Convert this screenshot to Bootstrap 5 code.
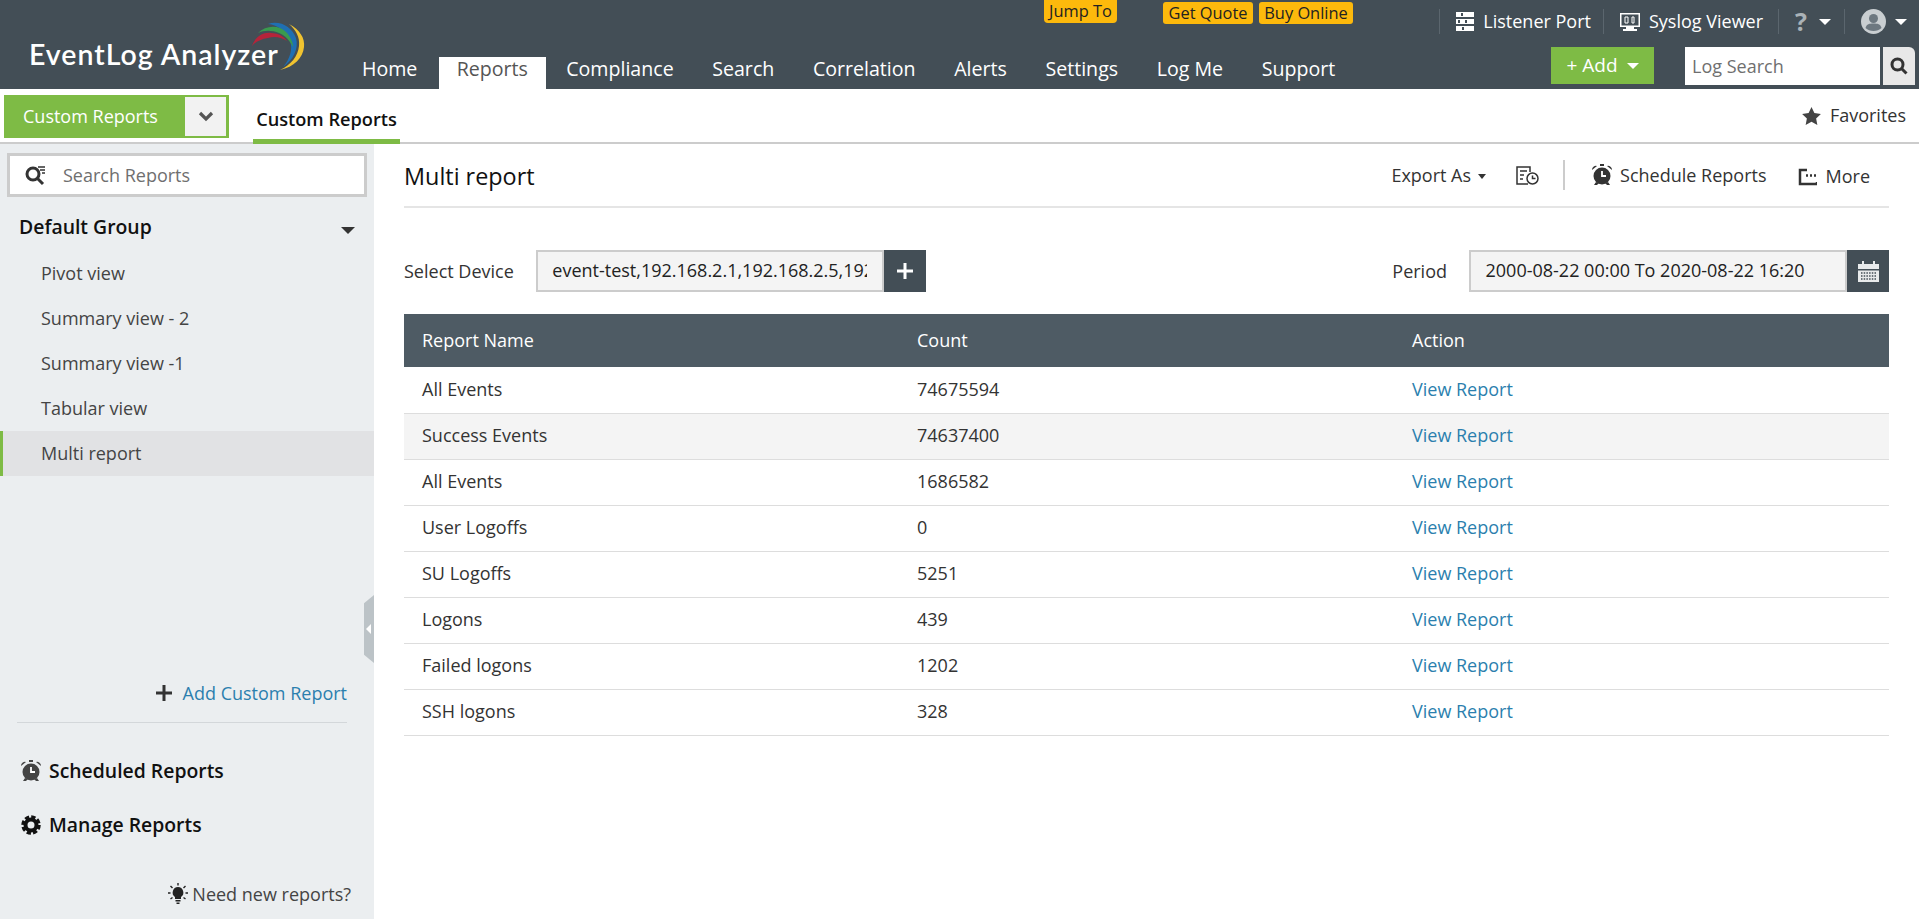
<!DOCTYPE html>
<html lang="en">
<head>
<meta charset="utf-8">
<title>EventLog Analyzer</title>
<link href="https://cdn.jsdelivr.net/npm/bootstrap@5.3.0/dist/css/bootstrap.min.css" rel="stylesheet">
<style>
html,body{height:100%;overflow:hidden}
body{font-family:"Open Sans","Liberation Sans",sans-serif;font-size:18px;color:#222;background:#fff}
a{text-decoration:none}
.app-shell{height:919px}
.top-head{height:89px;background:#434e56;color:#fff;flex:none}
.logo-area{width:362px;flex:none;padding:20px 0 0 29px}
.logo-name{font-family:Lato,"Open Sans",sans-serif;font-weight:600;font-size:28.5px;line-height:1;letter-spacing:1px;padding-top:20px;white-space:nowrap}
.logo-arc{position:absolute;left:250px;top:20px}
.head-right{min-width:0}
.row-top{height:47px;padding-right:12px}
.row-nav{height:42px}
.promo{background:#fdb90c;color:#222;font-size:16.4px;line-height:22px;padding:0;border-radius:3px;white-space:nowrap}
.promo-jump{margin-left:682px;height:23px;border-radius:0 0 4px 4px;width:73px;text-align:center}
.promo-quote{margin-left:46px;margin-top:2px;width:90px;text-align:center}
.promo-buy{margin-left:6px;margin-top:2px;width:94px;text-align:center}
.top-links{margin-left:auto;height:25px;margin-top:9px;font-size:18px;line-height:25px}
.top-link{padding:0 13px 0 16px;border-left:1px solid #5b666e;gap:9px;white-space:nowrap}
.top-link-listen{padding-right:12px}
.top-link-syslog{padding-right:15px}
.main-nav{margin:0;padding:0;list-style:none;height:32px;align-self:flex-end}
.main-nav a{display:block;color:#fff;font-size:19.6px;line-height:23px;padding:0 19.3px}
.main-nav li:first-child a{padding-left:0}
.main-nav li:nth-child(2){margin:0 1px 0 2px}
.main-nav .cur a{background:#fff;color:#555;height:32px;padding:0 18px}
.add-btn{background:#7ebb45;color:#fff;font-size:19px;width:103px;height:37px;border:0;border-radius:0;margin-left:auto;padding:0;display:flex;align-items:center;justify-content:center;gap:9px}
.add-btn:hover{background:#7ebb45;color:#fff}
.log-field{width:195px;height:38px;border:0;border-radius:0;margin:0 0 0 31px;font-size:18px;padding:0 4px 0 7px;color:#555}
.log-field::placeholder,.side-find input::placeholder{color:#6f6f6f;opacity:1}
.log-go{width:32px;height:38px;background:#e8e8e8;margin:0 4px 0 3px;border-radius:0 6px 0 0}
.sub-bar{height:55px;border-bottom:2px solid #ccc;flex:none;padding:6px 13px 0 4px}
.group-pick{width:225px;height:43px;background:#7ebb45;color:#fff;font-size:18px;padding:2px 3px 2px 19px}
.group-drop{width:41px;height:39px;background:#f2f2f2}
.sub-tab{margin-left:24px;height:49px;width:147px;text-align:center;border-bottom:5px solid #7ebb45;font-size:18.2px;font-weight:600;color:#111;line-height:48px}
.fav-link{margin-left:auto;gap:9px;font-size:18px;color:#333;padding-bottom:6px}
.side-panel{width:374px;flex:none;background:#ebeef0;position:relative;padding-top:9px}
.side-find{margin:0 7px 0 7px;height:44px;background:#fff;border:3px solid #ccc;padding-left:15px;gap:17px}
.side-find input{border:0;outline:0;background:transparent;font-size:18px;padding:0;width:270px;min-width:0;color:#555}
.grp-row{height:54px;padding:6px 18px 0 19px;font-size:19.4px;font-weight:600;color:#111}
.grp-caret{width:0;height:0;border:7px solid transparent;border-top:7px solid #333;border-bottom:0;margin:6px 1px 0 0}
.side-item{height:45px;padding-left:41px;color:#444;font-size:18px;display:flex;align-items:center}
.side-item.on{background:#e1e2e4;box-shadow:inset 3px 0 0 #7ebb45}
.side-handle{position:absolute;left:364px;top:451px;width:10px;height:68px;background:#bcc3c7;clip-path:polygon(100% 0,100% 100%,0 88%,0 12%)}
.side-handle::after{content:"";position:absolute;left:2px;top:29px;border:5px solid transparent;border-right:5px solid #fff;border-left:0}
.add-custom{margin-top:auto;height:34px;padding-right:27px;gap:11px;font-size:18px;color:#2b7fae}
.side-rule{margin:12px 27px 26px 17px;border-top:1px solid #d3d7da;height:0}
.side-cmd{height:44px;padding-left:21px;gap:8px;font-size:19.4px;font-weight:600;color:#111;margin-bottom:10px}
.need-row{height:34px;margin:20px 23px 8px 0;gap:4px;font-size:18px;color:#444}
.work{padding:0 30px;min-width:0}
.tool-row{height:64px;border-bottom:2px solid #e5e5e5;flex:none}
.page-title{font-size:23.4px;font-weight:500;margin:0;color:#111;line-height:1.2;padding-top:2px}
.tool-acts{margin-left:auto;font-size:18px;color:#333;height:30px}
.hist-icon{margin-left:30px}
.caret-sm{display:inline-block;width:0;height:0;border:4.5px solid transparent;border-top:5px solid #333;border-bottom:0;margin-left:7px;vertical-align:middle}
.v-rule{width:2px;height:30px;background:#ccc;margin:0 27px 0 24px}
.filter-row{margin-top:42px;height:42px;flex:none}
.fake-input{height:42px;border:2.500px solid #ccc;background:#f4f4f4;font-size:18px;padding:0 14.500px;line-height:37px;white-space:nowrap;overflow:hidden;color:#222}
.fake-inner{overflow:hidden;display:block}
.input-tail{width:42px;height:42px;background:#434e56}
.flt-label{font-size:18px;color:#333}
.log-table{margin:22px 0 0;font-size:18px;color:#333;table-layout:fixed;width:100%;--bs-table-bg:transparent}
.log-table th{background:#4e5b64;color:#fff;font-weight:400;height:53px;padding:0 18px;vertical-align:middle;border:0}
.log-table td{height:46px;padding:0 18px 1px;vertical-align:middle;border-bottom:1px solid #ddd;background:#fff;color:#333}
.log-table tr.alt td{background:#f4f4f4}
.log-table a{color:#2b7fae}
</style>
</head>
<body>
<div class="app-shell d-flex flex-column">
  <header class="top-head d-flex position-relative">
    <div class="logo-area"><div class="logo-name">EventLog Analyzer</div></div>
    <svg class="logo-arc" width="56" height="52" viewBox="250 20 56 52">
      <path d="M289 24C300 30 305 38 304 47C303 58 294 67 280 70C291 65 298 56 299 46C300 37 296 30 289 24Z" fill="#f0c330"/>
      <path d="M268 24C280 20 292 27 296 38C299 49 293 60 283 67C290 59 293 49 290 41C286 31 278 25 268 24Z" fill="#1f6fb2"/>
      <path d="M258 33C266 25 279 25 286 32C290 36 293 42 293 47C290 41 285 35 279 33C272 30 264 30 258 33Z" fill="#3a9a4e"/>
      <path d="M252 46C255 37 263 32 271 33C279 33 284 37 287 41C281 37 274 36 268 38C261 39 255 42 252 46Z" fill="#b5243a"/>
    </svg>
    <div class="head-right flex-grow-1 d-flex flex-column">
      <div class="row-top d-flex align-items-start">
        <a class="promo promo-jump" href="#">Jump To</a>
        <a class="promo promo-quote" href="#">Get Quote</a>
        <a class="promo promo-buy" href="#">Buy Online</a>
        <div class="top-links d-flex">
          <a class="top-link top-link-listen d-flex align-items-center text-white" href="#">
            <svg width="18" height="19" viewBox="0 0 18 19" fill="#fff"><rect width="18" height="5"/><rect y="7" width="18" height="5"/><rect y="14" width="18" height="5"/><path d="M5 1h2v3H5zM2 8h2v3H2zM9 8h2v3H9zM6 15h2v3H6z" fill="#434e56"/></svg>
            Listener Port</a>
          <a class="top-link top-link-syslog d-flex align-items-center text-white" href="#">
            <svg width="20" height="20" viewBox="0 0 20 20"><rect x=".75" y="1.75" width="18.5" height="12.5" fill="none" stroke="#fff" stroke-width="1.5"/><path d="M6 15h8v2h3v2H3v-2h3z" fill="#fff"/><path d="M5 5h3v6H5zM12 5h2v6h-2z" fill="none" stroke="#fff"/></svg>
            Syslog Viewer</a>
          <a class="top-link d-flex align-items-center" href="#" style="color:#aab2b7">
            <span class="fw-bold" style="font-size:25px;line-height:25px">?</span><span class="caret-sm" style="border-top-color:#fff;border-width:6px 6px 0;margin-left:3px"></span></a>
          <a class="top-link d-flex align-items-center" href="#" style="padding-right:0">
            <svg width="25" height="25" viewBox="0 0 25 25"><circle cx="12.5" cy="12.5" r="12.5" fill="#c9ced1"/><circle cx="12.5" cy="9.5" r="4.5" fill="#6d7880"/><path d="M4.5 19c1-4 4-4.500 8-4.500s7 .5 8 4.500c-2 2-5 3-8 3s-6-1-8-3z" fill="#6d7880"/></svg>
            <span class="caret-sm" style="border-top-color:#fff;border-width:6px 6px 0;margin-left:0"></span></a>
        </div>
      </div>
      <div class="row-nav d-flex">
        <ul class="main-nav d-flex">
          <li><a href="#">Home</a></li>
          <li class="cur"><a href="#">Reports</a></li>
          <li><a href="#">Compliance</a></li>
          <li><a href="#">Search</a></li>
          <li><a href="#">Correlation</a></li>
          <li><a href="#">Alerts</a></li>
          <li><a href="#">Settings</a></li>
          <li><a href="#">Log Me</a></li>
          <li><a href="#">Support</a></li>
        </ul>
        <button class="btn add-btn" type="button"><span>+ Add</span><span class="caret-sm" style="border-top-color:#fff;border-width:6px 6px 0;margin:0"></span></button>
        <input class="form-control log-field" placeholder="Log Search">
        <div class="log-go d-flex align-items-center justify-content-center">
          <svg width="18" height="18" viewBox="0 0 18 18" fill="none" stroke="#333" stroke-width="3"><circle cx="7.500" cy="7.500" r="5.500"/><path d="M11.500 11.500L16.500 16.500"/></svg>
        </div>
      </div>
    </div>
  </header>

  <div class="sub-bar d-flex align-items-start">
    <div class="group-pick d-flex align-items-center justify-content-between">
      <span>Custom Reports</span>
      <span class="group-drop d-flex align-items-center justify-content-center">
        <svg width="16" height="11" viewBox="0 0 16 11" fill="none" stroke="#555" stroke-width="3.200"><path d="M2 2l6 6 6-6"/></svg>
      </span>
    </div>
    <div class="sub-tab">Custom Reports</div>
    <a class="fav-link d-flex align-items-center align-self-center" href="#">
      <svg width="19" height="18" viewBox="0 0 24 23" fill="#444"><path d="M12 0l3.700 7.800 8.300 1.100-6.100 5.800 1.600 8.300L12 19l-7.500 4 1.600-8.300L0 8.900l8.300-1.100z"/></svg>
      Favorites</a>
  </div>

  <div class="d-flex flex-grow-1" style="min-height:0">
    <aside class="side-panel d-flex flex-column">
      <div class="side-find d-flex align-items-center">
        <svg width="21" height="21" viewBox="0 0 21 21" fill="none" stroke="#333" stroke-width="3"><circle cx="8" cy="9" r="6"/><path d="M12 13l6 6"/><path d="M13 2h7M15 5h5M17 8h3" stroke-width="1.500"/></svg>
        <input placeholder="Search Reports">
      </div>
      <div class="grp-row d-flex align-items-center justify-content-between"><span>Default Group</span><span class="grp-caret"></span></div>
      <a class="side-item" href="#">Pivot view</a>
      <a class="side-item" href="#">Summary view - 2</a>
      <a class="side-item" href="#">Summary view -1</a>
      <a class="side-item" href="#">Tabular view</a>
      <a class="side-item on" href="#">Multi report</a>
      <div class="side-handle"></div>
      <a class="add-custom d-flex align-items-center justify-content-end" href="#">
        <svg width="16" height="16" viewBox="0 0 16 16" fill="#333"><path d="M6.500 0h3v6.500H16v3H9.500V16h-3V9.500H0v-3h6.500z"/></svg>
        Add Custom Report</a>
      <div class="side-rule"></div>
      <a class="side-cmd d-flex align-items-center" href="#">
        <svg width="20" height="22" viewBox="0 0 20 22"><circle cx="10" cy="12" r="8.500" fill="#444"/><path d="M0 6a4 4 0 0 1 5-4zM20 6a4 4 0 0 0-5-4zM8 0h4v2H8zM4 18l-2 3h3l2-2zM16 18l2 3h-3l-2-2z" fill="#444"/><path d="M10 7v5h4" fill="none" stroke="#fff" stroke-width="1.800"/></svg>
        Scheduled Reports</a>
      <a class="side-cmd d-flex align-items-center" href="#">
        <svg width="20" height="20" viewBox="0 0 20 20"><circle cx="10" cy="10" r="5.500" fill="none" stroke="#111" stroke-width="4"/><circle cx="10" cy="10" r="8" fill="none" stroke="#111" stroke-width="3.500" stroke-dasharray="4.200 2.080"/></svg>
        Manage Reports</a>
      <a class="need-row d-flex align-items-center justify-content-end" href="#">
        <svg width="20" height="22" viewBox="0 0 20 22"><path d="M10 4a5.500 5.500 0 0 0-3 10v2h6v-2a5.500 5.500 0 0 0-3-10zM7.500 17h5v1.500h-5zM8.500 19.500h3V21h-3z" fill="#222"/><path d="M10 0v2.500M2.500 3l2 2M17.500 3l-2 2M0 10h2.500M17.500 10H20M2.500 16l2-1.500M17.500 16l-2-1.500" stroke="#222" stroke-width="1.400"/></svg>
        Need new reports?</a>
    </aside>

    <main class="work flex-grow-1 d-flex flex-column">
      <div class="tool-row d-flex align-items-center">
        <h1 class="page-title">Multi report</h1>
        <div class="tool-acts d-flex align-items-center">
          <span>Export As<span class="caret-sm"></span></span>
          <svg class="hist-icon" width="23" height="19" viewBox="0 0 23 19" fill="none" stroke="#333" stroke-width="1.500"><path d="M12 18H1V1h13v5"/><path d="M4 5h7M4 9h4M4 13h3"/><circle cx="16.500" cy="12.500" r="5.500"/><path d="M16.500 9.500v3h3"/></svg>
          <span class="v-rule"></span>
          <svg width="20" height="22" viewBox="0 0 20 22"><circle cx="10" cy="12" r="8.500" fill="#333"/><path d="M0 6a4 4 0 0 1 5-4zM20 6a4 4 0 0 0-5-4zM8 0h4v2H8zM4 18l-2 3h3l2-2zM16 18l2 3h-3l-2-2z" fill="#333"/><path d="M10 7v5h4" fill="none" stroke="#fff" stroke-width="1.800"/></svg>
          <span class="ms-2">Schedule Reports</span>
          <span class="d-flex align-items-center" style="margin-left:31px;padding-top:3px;gap:9px">
            <svg width="19" height="18" viewBox="0 0 19 18" fill="none" stroke="#333" stroke-width="2.500"><path d="M9 2H2v14h17v-2"/><path d="M8 7.500h2M12 7.500h2M16 7.500h2" stroke-width="2.500"/></svg>
            More</span>
          <span style="width:19px"></span>
        </div>
      </div>
      <div class="filter-row d-flex justify-content-between">
        <div class="d-flex align-items-center">
          <label class="flt-label" style="margin-right:22px">Select Device</label>
          <div class="fake-input" style="width:348px"><span class="fake-inner">event-test,192.168.2.1,192.168.2.5,192.168.2.7</span></div>
          <a class="input-tail d-flex align-items-center justify-content-center" href="#">
            <svg width="16" height="16" viewBox="0 0 16 16" fill="#fff"><path d="M6.500 0h3v6.500H16v3H9.500V16h-3V9.500H0v-3h6.500z"/></svg>
          </a>
        </div>
        <div class="d-flex align-items-center">
          <label class="flt-label" style="margin-right:22px">Period</label>
          <div class="fake-input" style="width:378px">2000-08-22 00:00 To 2020-08-22 16:20</div>
          <a class="input-tail d-flex align-items-center justify-content-center" href="#">
            <svg width="21" height="21" viewBox="0 0 21 21" fill="#e8eaeb"><path d="M0 3h4V0h2v3h9V0h2v3h4v5H0zM0 9.500h21V21H0z"/><path d="M3 12h15M3 15h15M3 18h15" stroke="#434e56" stroke-width="1.500" stroke-dasharray="1.500 1.200"/></svg>
          </a>
        </div>
      </div>
      <table class="table log-table">
        <thead><tr><th>Report Name</th><th>Count</th><th>Action</th></tr></thead>
        <tbody>
          <tr><td>All Events</td><td>74675594</td><td><a href="#">View Report</a></td></tr>
          <tr class="alt"><td>Success Events</td><td>74637400</td><td><a href="#">View Report</a></td></tr>
          <tr><td>All Events</td><td>1686582</td><td><a href="#">View Report</a></td></tr>
          <tr><td>User Logoffs</td><td>0</td><td><a href="#">View Report</a></td></tr>
          <tr><td>SU Logoffs</td><td>5251</td><td><a href="#">View Report</a></td></tr>
          <tr><td>Logons</td><td>439</td><td><a href="#">View Report</a></td></tr>
          <tr><td>Failed logons</td><td>1202</td><td><a href="#">View Report</a></td></tr>
          <tr><td>SSH logons</td><td>328</td><td><a href="#">View Report</a></td></tr>
        </tbody>
      </table>
    </main>
  </div>
</div>
<script src="https://cdn.jsdelivr.net/npm/bootstrap@5.3.0/dist/js/bootstrap.bundle.min.js"></script>
</body>
</html>
